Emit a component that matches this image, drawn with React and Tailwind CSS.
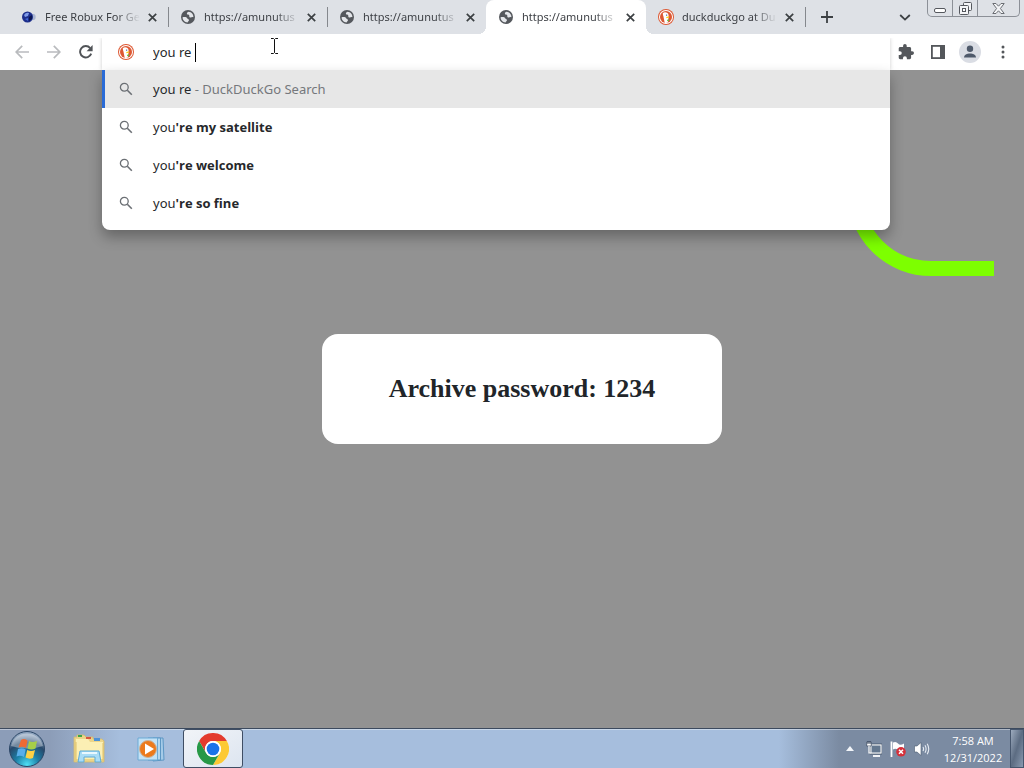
import React, { useState } from "react";

const TABS = [
  { id: 1, title: "Free Robux For Ge", icon: "blue", active: false },
  { id: 2, title: "https://amunutus", icon: "globe", active: false },
  { id: 3, title: "https://amunutus", icon: "globe", active: false },
  { id: 4, title: "https://amunutus", icon: "globe", active: true },
  { id: 5, title: "duckduckgo at Du", icon: "duck", active: false },
];

const SUGGESTIONS = [
  { id: 1, typed: "you re", rest: "", source: "DuckDuckGo Search" },
  { id: 2, typed: "you", rest: "'re my satellite" },
  { id: 3, typed: "you", rest: "'re welcome" },
  { id: 4, typed: "you", rest: "'re so fine" },
];

function BlueIcon() {
  return (
    <svg className="size-4" viewBox="0 0 16 16" aria-hidden="true">
      <circle cx="11.5" cy="8" r="3.2" fill="#aab6d2" />
      <circle cx="6.5" cy="8" r="5.5" fill="#1d2f8c" />
      <path d="M3 6Q5 3 8 4L7 7L4 8Z" fill="#7f9be8" />
      <path d="M8 8L11 6V10L8 12Z" fill="#0c1650" />
      <path d="M4 10L7 9L7 12Z" fill="#4468d6" />
    </svg>
  );
}

function GlobeIcon() {
  return (
    <svg className="size-4" viewBox="0 0 16 16" aria-hidden="true">
      <circle cx="8" cy="8" r="7" fill="#55585d" />
      <path
        d="M2.6 8.2C4.5 7.8 6.9 8 7.2 9.2C7.4 10.3 9.2 9.8 9 11.2C8.9 12.2 8 12.2 7.6 13.4C4.6 13.3 2.5 11 2.6 8.2Z"
        fill="#e4e6ea"
      />
      <path
        d="M8.6 2.7C7 3.2 6.7 4 7 5C7.4 6 8.8 5.4 9.2 6.3C9.6 7.2 8.8 8 10 8.4C11.2 8.8 12.2 7.7 13.4 8.2C13.6 5.4 11.4 2.8 8.6 2.7Z"
        fill="#e4e6ea"
      />
    </svg>
  );
}

function DuckIcon() {
  return (
    <svg className="size-4" viewBox="0 0 16 16" aria-hidden="true">
      <circle cx="8" cy="8" r="8" fill="#dd5833" />
      <circle cx="8" cy="8" r="7" fill="#fff" />
      <circle cx="8" cy="8" r="6" fill="#dd5833" />
      <path
        d="M4.8 4.2C6.4 2.6 10.2 3 10.6 6.2L10.4 9.4L9.8 13.6Q8 14.2 6.7 13.7L5.5 7.8Q4.7 5.6 4.8 4.2Z"
        fill="#fff"
      />
      <path d="M8.3 7.9Q10.5 7.2 11.6 7.8Q10.8 8.9 8.4 9.2Z" fill="#fdd20a" />
      <circle cx="8.6" cy="6.1" r="0.7" fill="#2d4f8e" />
      <path d="M9.2 10.8L11 10.3V12.2L9.1 12Z" fill="#65bc46" />
    </svg>
  );
}

function TabIcon({ icon }) {
  if (icon === "blue") return <BlueIcon />;
  if (icon === "duck") return <DuckIcon />;
  return <GlobeIcon />;
}

function Tab({ tab }) {
  return (
    <div
      className={
        tab.active
          ? "relative flex h-full w-[160px] min-w-0 items-center rounded-t-lg bg-white pl-3 pr-2 before:absolute before:-left-2 before:bottom-0 before:size-2 before:bg-[radial-gradient(circle_at_0_0,transparent_8px,white_8px)] after:absolute after:-right-2 after:bottom-0 after:size-2 after:bg-[radial-gradient(circle_at_100%_0,transparent_8px,white_8px)]"
          : "flex h-full w-[159px] min-w-0 items-center pl-3 pr-2"
      }
    >
      <button className="flex min-w-0 flex-1 items-center gap-2 text-left">
        <span className="shrink-0">
          <TabIcon icon={tab.icon} />
        </span>
        <span className="min-w-0 flex-1 whitespace-nowrap font-['Noto_Sans',sans-serif] text-[11px] leading-4 text-[#3c3f44] [mask-image:linear-gradient(to_right,black_75%,transparent)]">
          {tab.title}
        </span>
      </button>
      <button className="ml-1 flex size-4 shrink-0 items-center justify-center" aria-label="Close tab">
        <svg className="size-[9px]" viewBox="0 0 9 9" aria-hidden="true">
          <path d="M0.8 0.8L8.2 8.2M8.2 0.8L0.8 8.2" stroke="#3c4043" strokeWidth="1.7" />
        </svg>
      </button>
    </div>
  );
}

function WindowButtons() {
  return (
    <div className="mr-1 flex h-[17px] self-start rounded-b-[5px] border border-t-0 border-[#8c9097]">
      <button className="flex w-[25px] items-center justify-center border-r border-[#8c9097]" aria-label="Minimize">
        <svg className="mt-1 h-[5px] w-[13px]" viewBox="0 0 13 5" aria-hidden="true">
          <rect x="0.5" y="0.5" width="11" height="4" rx="1.5" fill="#fff" stroke="#55585e" />
        </svg>
      </button>
      <button className="flex w-[25px] items-center justify-center border-r border-[#8c9097]" aria-label="Restore">
        <svg className="size-[13px]" viewBox="0 0 13 13" aria-hidden="true">
          <rect x="4.5" y="0.5" width="8" height="8" rx="1" fill="#f4f5f7" stroke="#55585e" />
          <rect x="0.5" y="3.5" width="9" height="9" rx="1" fill="#f4f5f7" stroke="#55585e" />
          <rect x="3.5" y="6.5" width="3" height="3" fill="#fff" stroke="#55585e" />
        </svg>
      </button>
      <button className="flex w-[41px] items-center justify-center" aria-label="Close">
        <svg className="h-[11px] w-[13px]" viewBox="0 0 13 11" aria-hidden="true">
          <path
            d="M0.8 0.5H4L6.5 3.2L9 0.5H12.2L8.4 5.5L12.2 10.5H9L6.5 7.8L4 10.5H0.8L4.6 5.5Z"
            fill="#f4f5f7"
            stroke="#6a6d73"
          />
        </svg>
      </button>
    </div>
  );
}

function TabStrip() {
  return (
    <header className="flex h-[34px] shrink-0 items-center bg-[#dee1e6] pl-[9px]">
      <div className="flex h-full min-w-0 items-center">
        {TABS.map((tab, i) => (
          <React.Fragment key={tab.id}>
            <Tab tab={tab} />
            {!tab.active && !TABS[i + 1]?.active && <span className="-mr-px h-5 w-px shrink-0 bg-[#85888d]" />}
          </React.Fragment>
        ))}
      </div>
      <button className="ml-4 flex size-3 shrink-0 items-center justify-center" aria-label="New tab">
        <svg className="size-3" viewBox="0 0 12 12" aria-hidden="true">
          <path d="M6 0V12M0 6H12" stroke="#3c4043" strokeWidth="1.8" />
        </svg>
      </button>
      <button className="ml-auto mr-4 flex shrink-0 items-center justify-center" aria-label="Search tabs">
        <svg className="h-[7px] w-[12px]" viewBox="0 0 12 7" aria-hidden="true">
          <path d="M1.2 1L6 5.6L10.8 1" fill="none" stroke="#3c4043" strokeWidth="1.8" />
        </svg>
      </button>
      <WindowButtons />
    </header>
  );
}

function SearchIcon() {
  return (
    <svg className="size-[14px]" viewBox="0 0 14 14" aria-hidden="true">
      <circle cx="5.3" cy="5.3" r="3.9" fill="none" stroke="#6b6f74" strokeWidth="1.3" />
      <path d="M8.3 8.3L12.8 12.8" stroke="#6b6f74" strokeWidth="1.6" />
    </svg>
  );
}

function Suggestions() {
  return (
    <ul className="absolute inset-x-0 top-full z-20 overflow-hidden rounded-b-lg bg-white pb-2 shadow-[0_7px_14px_rgba(0,0,0,0.3)]">
      {SUGGESTIONS.map((s, i) => (
        <li key={s.id}>
          <button
            className={
              i === 0
                ? "flex h-[38px] w-full items-center border-l-[3px] border-[#2a6bd6] bg-[#e7e7e7] pl-[14px] text-left"
                : "flex h-[38px] w-full items-center border-l-[3px] border-transparent pl-[14px] text-left"
            }
          >
            <SearchIcon />
            <span className="ml-5 font-['Noto_Sans',sans-serif] text-[13px] leading-5 text-[#26282b]">
              {s.typed}
              {s.rest && <b className="font-['Open_Sans',sans-serif] font-bold">{s.rest}</b>}
              {s.source && <span className="text-[#75787c]"> - {s.source}</span>}
            </span>
          </button>
        </li>
      ))}
    </ul>
  );
}

function Omnibox() {
  const [query, setQuery] = useState("you re ");

  return (
    <div className="relative flex h-full min-w-0 flex-1">
      <div className="mt-1 flex flex-1 items-center bg-white pb-1 pl-4 shadow-[0_0_4px_rgba(0,0,0,0.2)] [clip-path:inset(0_-6px)]">
        <DuckIcon />
        <input
          type="text"
          aria-label="Address and search bar"
          value={query}
          onChange={(e) => setQuery(e.target.value)}
          className="ml-[19px] field-sizing-content bg-transparent font-['Noto_Sans',sans-serif] text-[13px] leading-5 text-[#26282b] outline-none"
        />
        <span className="h-[19px] w-px bg-black" />
      </div>
      {/* text cursor */}
      <svg className="absolute left-[168px] top-[4px] h-[16px] w-[9px]" viewBox="0 0 9 16" aria-hidden="true">
        <path d="M1 0.5H3.5L4.5 1.5L5.5 0.5H8M4.5 1.5V14.5M1 15.5H3.5L4.5 14.5L5.5 15.5H8" fill="none" stroke="#111" />
      </svg>
      <Suggestions />
    </div>
  );
}

function ArrowIcon({ flip }) {
  return (
    <svg className={flip ? "size-[14px] rotate-180" : "size-[14px]"} viewBox="0 0 14 14" aria-hidden="true">
      <path d="M14 7H1.5M7.2 0.9L1.2 7L7.2 13.1" fill="none" stroke="#b9bbbe" strokeWidth="1.7" />
    </svg>
  );
}

function Toolbar() {
  return (
    <div className="flex h-[36px] shrink-0 items-center bg-white">
      <nav className="flex w-[102px] shrink-0 items-center gap-[18px] pl-[15px]">
        <button aria-label="Back">
          <ArrowIcon />
        </button>
        <button aria-label="Forward">
          <ArrowIcon flip />
        </button>
        <button aria-label="Reload">
          <svg className="size-[14px]" viewBox="0 0 14 14" aria-hidden="true">
            <path d="M12.2 8.6A5.7 5.7 0 1 1 11.2 3.1" fill="none" stroke="#505357" strokeWidth="1.9" />
            <path d="M13.6 0V6.2H7.6Z" fill="#505357" />
          </svg>
        </button>
      </nav>
      <Omnibox />
      <div className="flex w-[134px] shrink-0 items-center pl-2">
        <button aria-label="Extensions">
          <svg className="size-4" viewBox="1 1 22 22" aria-hidden="true">
            <path
              d="M20.5 11H19V7c0-1.1-.9-2-2-2h-4V3.5a2.5 2.5 0 0 0-5 0V5H4c-1.1 0-2 .9-2 2v3.8h1.5a2.7 2.7 0 0 1 0 5.4H2V20c0 1.1.9 2 2 2h3.8v-1.5a2.7 2.7 0 0 1 5.4 0V22H17c1.1 0 2-.9 2-2v-4h1.5a2.5 2.5 0 0 0 0-5z"
              fill="#54575b"
            />
          </svg>
        </button>
        <button className="ml-[17px]" aria-label="Side panel">
          <svg className="size-[14px]" viewBox="0 0 14 14" aria-hidden="true">
            <rect x="0.9" y="0.9" width="12.2" height="12.2" fill="none" stroke="#54575b" strokeWidth="1.8" />
            <rect x="9" y="1" width="4.5" height="12" fill="#54575b" />
          </svg>
        </button>
        <button className="ml-[14px]" aria-label="Profile">
          <svg className="size-[22px]" viewBox="0 0 22 22" aria-hidden="true">
            <circle cx="11" cy="11" r="11" fill="#dadde4" />
            <circle cx="11" cy="7.8" r="3.2" fill="#4f5a6b" />
            <path d="M5 16.6C5 13.6 8 12.4 11 12.4S17 13.6 17 16.6Z" fill="#4f5a6b" />
          </svg>
        </button>
        <button className="ml-5" aria-label="Menu">
          <svg className="h-[14px] w-[4px]" viewBox="0 0 4 14" aria-hidden="true">
            <circle cx="2" cy="2" r="1.5" fill="#54575b" />
            <circle cx="2" cy="7" r="1.5" fill="#54575b" />
            <circle cx="2" cy="12" r="1.5" fill="#54575b" />
          </svg>
        </button>
      </div>
    </div>
  );
}

function Page() {
  return (
    <main className="relative flex flex-1 items-center justify-center overflow-hidden bg-[#929292] pb-[20px] pl-[20px]">
      <svg className="absolute right-[30px] top-0 h-[210px] w-[144px]" viewBox="0 0 144 210" aria-hidden="true">
        <path d="M144 198.5H81A76 76 0 0 1 5 122.5" fill="none" stroke="#7dff00" strokeWidth="15" />
      </svg>
      <section className="flex h-[110px] w-[400px] items-center justify-center rounded-2xl bg-white">
        <h1 className="font-['Liberation_Serif',serif] text-[26px] font-bold leading-8 text-[#212529]">
          Archive password: 1234
        </h1>
      </section>
    </main>
  );
}

function StartOrb() {
  return (
    <svg className="size-[38px]" viewBox="0 0 38 38" aria-hidden="true">
      <defs>
        <radialGradient id="orb" cx="50%" cy="95%" r="85%">
          <stop offset="0" stopColor="#4fe0f5" />
          <stop offset="0.4" stopColor="#1c7fa6" />
          <stop offset="0.75" stopColor="#28496b" />
          <stop offset="1" stopColor="#8fa5bf" />
        </radialGradient>
      </defs>
      <circle cx="19" cy="19" r="17.5" fill="url(#orb)" stroke="#2b4666" />
      <path d="M3 16A16.5 16.5 0 0 1 35 16Q19 21 3 16Z" fill="#fff" opacity="0.35" />
      <path d="M13 10Q16 8 19.5 10.5L18 18Q14.500 16 10.500 17.500Z" fill="#ee6a33" />
      <path d="M21 11Q24.500 13 29 11L27.500 18.500Q23.500 20.500 19.500 18.500Z" fill="#a6cf48" />
      <path d="M10 19Q14 17.500 17.700 19.500L16 27Q12.500 25 8.500 26.500Z" fill="#58aeea" />
      <path d="M19.200 20Q23 22 27 20L25 28Q21.500 29.500 17.500 27.500Z" fill="#fdd145" />
    </svg>
  );
}

function ExplorerIcon() {
  return (
    <svg className="size-[32px]" viewBox="0 0 32 32" aria-hidden="true">
      <path d="M1 4H4V2H11L13 4H20V6H29L31 8V29H1Z" fill="#ecd589" stroke="#d3ba70" strokeWidth="0.8" />
      <path d="M3 6H15L17 9H30V26H3Z" fill="#fbefb4" />
      <rect x="5" y="2" width="4" height="2" fill="#3da648" />
      <rect x="13" y="4" width="5" height="2" fill="#d8563e" />
      <rect x="21" y="5" width="6" height="3" fill="#4e92d6" />
      <path d="M3 9V28M30 10V28" stroke="#dfc26a" />
      <path d="M7 18H26L28 29H22V24H11V29H5Z" fill="#a9dcf5" stroke="#5fabd8" />
      <path d="M9 20H24" stroke="#e9f8ff" strokeWidth="2" />
    </svg>
  );
}

function MediaIcon() {
  return (
    <svg className="size-[28px]" viewBox="0 0 28 28" aria-hidden="true">
      <path d="M16 3H26L27 25L16 26Z" fill="#a5cbe8" stroke="#5d97c4" />
      <path d="M11 3H23.500V25H11Z" fill="#b5d8f0" stroke="#5d97c4" />
      <path d="M1 3H20.500V25H1Z" fill="#c3e2f6" stroke="#6daad4" />
      <circle cx="11" cy="14" r="8.500" fill="#ec7a1c" stroke="#c9b29b" />
      <path d="M8 8.500L17 14L8 19.500Z" fill="#fff" />
    </svg>
  );
}

function ChromeIcon() {
  return (
    <svg className="size-[32px]" viewBox="0 0 32 32" aria-hidden="true">
      <circle cx="16" cy="16" r="16" fill="#fff" />
      <path d="M16 8H29.860A16 16 0 0 0 2.140 8L9.070 20A8 8 0 0 1 16 8Z" fill="#e33b2e" />
      <path d="M22.930 20L16 32A16 16 0 0 0 29.860 8H16A8 8 0 0 1 22.930 20Z" fill="#fcc934" />
      <path d="M9.070 20L2.140 8A16 16 0 0 0 16 32L22.930 20A8 8 0 0 1 9.070 20Z" fill="#279847" />
      <circle cx="16" cy="16" r="7.900" fill="#fff" />
      <circle cx="16" cy="16" r="6.300" fill="#1a73e8" />
    </svg>
  );
}

function Tray() {
  return (
    <div className="flex items-center">
      <button aria-label="Show hidden icons">
        <svg className="h-[5px] w-[8px]" viewBox="0 0 8 5" aria-hidden="true">
          <path d="M4 0L8 5H0Z" fill="#f2f5f9" />
        </svg>
      </button>
      <button className="ml-3" aria-label="Network">
        <svg className="size-4" viewBox="0 0 16 16" aria-hidden="true">
          <rect x="4" y="3" width="12" height="10" fill="#fff" stroke="#3a4a60" strokeWidth="0.7" />
          <rect x="5.5" y="4.5" width="9" height="7" fill="#64788f" />
          <path d="M7 15H14" stroke="#fff" strokeWidth="1.8" />
          <path d="M0.7 1H5.3V5H0.7Z" fill="#fff" stroke="#33435a" strokeWidth="0.7" />
          <path d="M2 0V3M4 0V3" fill="none" stroke="#33435a" />
          <path d="M3 5V12H5" fill="none" stroke="#fff" strokeWidth="1.2" />
        </svg>
      </button>
      <button className="ml-2" aria-label="Action center">
        <svg className="size-4" viewBox="0 0 16 16" aria-hidden="true">
          <path d="M1.5 0.5V16" stroke="#fff" strokeWidth="1.8" />
          <path d="M3 1.5Q6 0 8 2.5T14 2.5V9Q11 10 8 8.5T3 8.5Z" fill="#fff" />
          <circle cx="11" cy="10.8" r="4.8" fill="#d5303a" />
          <path d="M9 8.8L13 12.8M13 8.8L9 12.8" stroke="#fff" strokeWidth="1.5" />
        </svg>
      </button>
      <button className="ml-2" aria-label="Volume">
        <svg className="size-4" viewBox="0 0 16 16" aria-hidden="true">
          <path d="M0.5 5H3L7 1.5V14.5L3 11H0.5Z" fill="#fff" stroke="#4a5a70" strokeWidth="0.6" />
          <path
            d="M9 6Q10.2 8 9 10M11 4.3Q13.2 8 11 11.7M13.2 2.8Q16.3 8 13.2 13.2"
            fill="none"
            stroke="#e6ebf2"
            strokeWidth="1.1"
          />
        </svg>
      </button>
    </div>
  );
}

function Taskbar() {
  return (
    <footer className="flex h-[40px] shrink-0 items-center border-t border-[#3c4a5e] bg-[linear-gradient(to_right,#8c9db8_0,#8c9db8_50px,#a6bedd_120px,#a6bedd_calc(100%-245px),#7b8ba2_calc(100%-185px),#7b8ba2_100%)] shadow-[inset_0_1px_0_rgba(255,255,255,0.4)]">
      <button className="ml-2 shrink-0" aria-label="Start">
        <StartOrb />
      </button>
      <button className="ml-[27px] shrink-0" aria-label="Windows Explorer">
        <ExplorerIcon />
      </button>
      <button className="ml-[32px] shrink-0" aria-label="Media Player">
        <MediaIcon />
      </button>
      <button
        className="ml-[18px] flex h-full w-[60px] shrink-0 items-center justify-center rounded-[3px] border border-[#3f4e64] bg-gradient-to-br from-[#f1f4f8] to-[#dde5f0]"
        aria-label="Google Chrome"
      >
        <ChromeIcon />
      </button>
      <div className="ml-auto flex h-full shrink-0 items-center">
        <Tray />
        <div className="ml-[10px] w-[66px] whitespace-nowrap text-center text-[11px] leading-[17px] text-white">
          <p>7:58 AM</p>
          <p>12/31/2022</p>
        </div>
        <button
          className="ml-1 h-full w-[14px] border border-[#46566d] bg-gradient-to-br from-[#9dabbe] via-[#5c6c82] to-[#8a9ab0]"
          aria-label="Show desktop"
        />
      </div>
    </footer>
  );
}

export default function App() {
  return (
    <div className="flex h-screen flex-col overflow-hidden font-['Open_Sans','Noto_Sans',sans-serif]">
      <TabStrip />
      <Toolbar />
      <Page />
      <Taskbar />
    </div>
  );
}
